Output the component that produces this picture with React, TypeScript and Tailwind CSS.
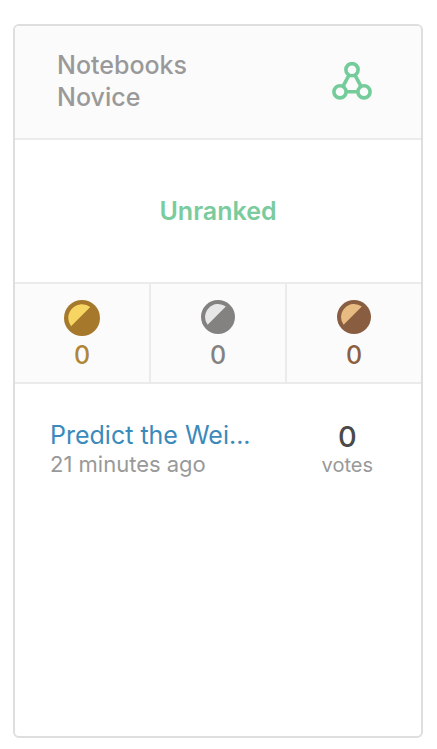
interface MedalProps {
  label: string;
  count: number;
  rim: string;
  shine: string;
  size: string;
  textColor: string;
}

const medals: MedalProps[] = [
  { label: 'Gold medals', count: 0, rim: '#a5782c', shine: '#f6d562', size: 'size-9', textColor: 'text-[#b08636]' },
  { label: 'Silver medals', count: 0, rim: '#838281', shine: '#e7e7e7', size: 'size-[34px]', textColor: 'text-[#838281]' },
  { label: 'Bronze medals', count: 0, rim: '#895d40', shine: '#e8bb83', size: 'size-[34px]', textColor: 'text-[#8d5f41]' },
];

function NotebooksIcon() {
  return (
    <svg viewBox="0 0 40 38" className="h-[38px] w-10 shrink-0" fill="none" stroke="#75cc9b" strokeWidth="3.6" aria-hidden="true">
      <circle cx="20" cy="7.7" r="6.1" />
      <circle cx="8" cy="29.8" r="6.1" />
      <circle cx="32" cy="29.8" r="6.1" />
      <path d="M17 13.2 11 24.4M23 13.2 29 24.4M14.1 29.8H25.9" />
    </svg>
  );
}

function Medal({ label, count, rim, shine, size, textColor }: MedalProps) {
  return (
    <li className="flex flex-1 flex-col items-center pt-4 pb-[11px]">
      <div className="h-9">
        <svg viewBox="0 0 36 36" className={size} role="img" aria-label={label}>
          <circle cx="18" cy="18" r="18" fill={rim} />
          <path d="M7 26.3A13.8 13.8 0 0 1 26.3 7Z" fill={shine} />
        </svg>
      </div>
      <span className={`mt-[3px] text-[25px] leading-8 font-medium ${textColor}`}>{count}</span>
    </li>
  );
}

export default function App() {
  return (
    <div className="flex min-h-screen flex-col bg-white pt-6 pr-[14px] pb-[11px] pl-[13px] font-['Inter',sans-serif]">
      <section className="flex flex-1 flex-col overflow-hidden rounded-md border-2 border-[#dedede] bg-white">
        <header className="flex items-center justify-between border-b-2 border-[#ebebeb] bg-[#fbfbfb] pt-[23px] pr-[49px] pb-[25px] pl-[42px]">
          <h2 className="w-40 text-[25px] leading-8 font-medium text-[#999]">Notebooks Novice</h2>
          <NotebooksIcon />
        </header>

        <p className="py-[55px] text-center text-[25px] leading-8 font-semibold text-[#7acb9d]">Unranked</p>

        <ul className="flex divide-x-2 divide-[#ebebeb] border-y-2 border-[#ebebeb] bg-[#fbfbfb]">
          {medals.map((medal) => (
            <Medal key={medal.label} {...medal} />
          ))}
        </ul>

        <div className="flex items-start justify-between pt-[35px] pr-12 pl-[35px]">
          <div className="min-w-0">
            <a href="#" className="block text-[25px] leading-8 text-[#3b8abb]">
              Predict the Wei...
            </a>
            <p className="text-[22px] leading-[26px] text-[#999]">21 minutes ago</p>
          </div>
          <div className="flex flex-col items-center">
            <span className="text-[29px] leading-9 font-medium text-[#4a4a4a]">0</span>
            <span className="text-xl leading-5 text-[#999]">votes</span>
          </div>
        </div>
      </section>
    </div>
  );
}
